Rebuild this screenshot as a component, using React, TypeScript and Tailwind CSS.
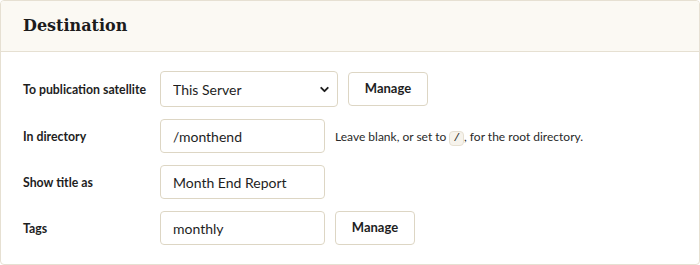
import { ChevronDown } from "lucide-react";

export default function App() {
  const inputCls =
    "h-[34px] w-[165px] rounded border border-[#ddd6c4] bg-white px-3 text-[14px] text-[#1e1e1e] outline-none";
  const btnCls =
    "h-[34px] w-[80px] rounded border border-[#ddd6c4] bg-white text-[13px] font-bold text-[#1e1e1e]";
  const labelCls = "w-[137px] pt-[2px] whitespace-nowrap text-[12.3px] font-bold";

  return (
    <div className="w-[700px] h-[265px] bg-white" style={{ fontFamily: 'Lato, sans-serif' }}>
      <div className="h-[265px] rounded border border-[#e6e0d2] overflow-hidden">
        <div className="h-[51px] bg-[#fbf9f3] border-b border-[#e6e0d2] flex items-center px-[22px]">
          <h2
            className="text-[16px] font-bold text-[#1c1c1c]"
            style={{ fontFamily: '"DejaVu Serif", serif' }}
          >
            Destination
          </h2>
        </div>

        <div className="pt-[19px] pl-[22px] flex flex-col gap-3 text-[13px] text-[#1e1e1e]">
          <div className="flex items-center">
            <label className={labelCls}>To publication satellite</label>
            <div className="relative">
              <select className="h-[36px] w-[178px] appearance-none rounded border border-[#ddd6c4] bg-white pl-3 text-[14px] outline-none">
                <option>This Server</option>
              </select>
              <ChevronDown
                size={13}
                strokeWidth={3.5}
                className="absolute right-[7px] top-[12px] pointer-events-none"
              />
            </div>
            <button className={`${btnCls} ml-[10px] h-[33px]`}>Manage</button>
          </div>

          <div className="flex items-center">
            <label className={labelCls}>In directory</label>
            <input className={inputCls} defaultValue="/monthend" />
            <span className="ml-[10px] pt-[1px] text-[12px] text-[#2a2a2a]">
              Leave blank, or set to{" "}
              <code className="inline-block rounded-sm border border-[#e6e0d2] bg-[#f6f3ec] px-[3px] text-[11px] leading-[13px] font-mono">
                /
              </code>
              , for the root directory.
            </span>
          </div>

          <div className="flex items-center">
            <label className={labelCls}>Show title as</label>
            <input className={inputCls} defaultValue="Month End Report" />
          </div>

          <div className="flex items-center">
            <label className={labelCls}>Tags</label>
            <input className={inputCls} defaultValue="monthly" />
            <button className={`${btnCls} ml-[10px]`}>Manage</button>
          </div>
        </div>
      </div>
    </div>
  );
}
